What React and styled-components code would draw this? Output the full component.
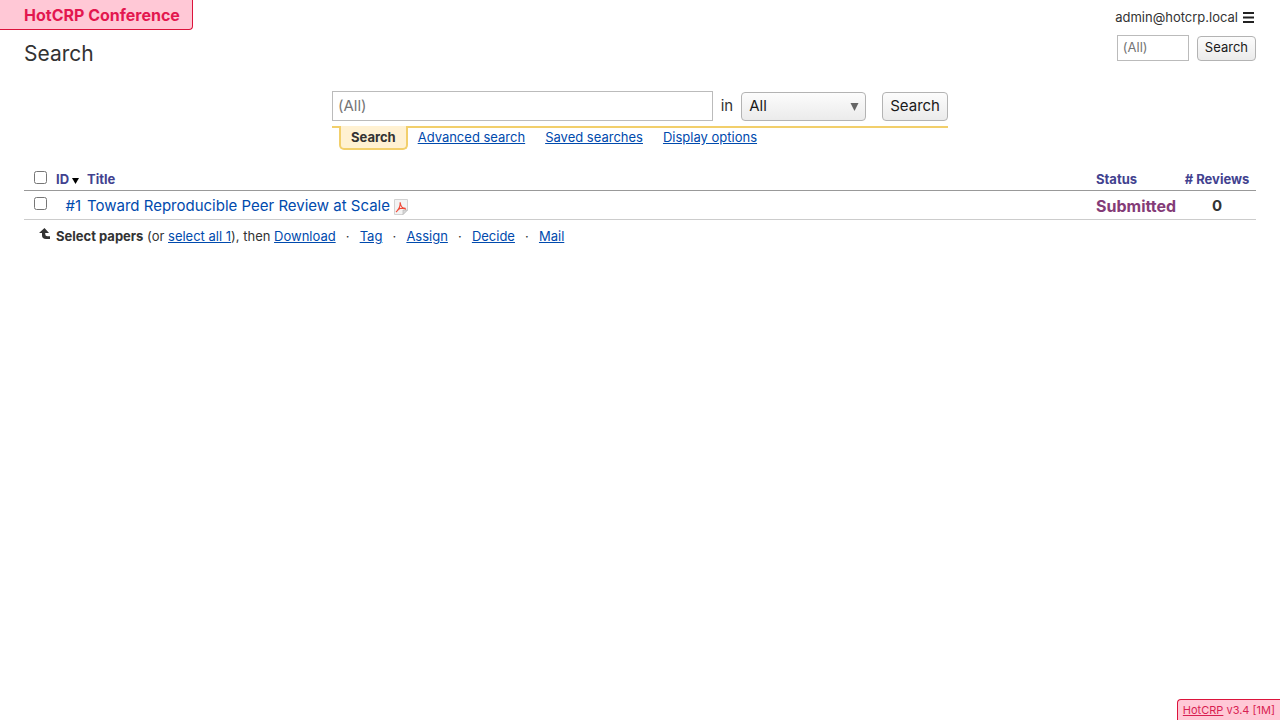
import React, { useState } from "react";
import styled, { createGlobalStyle } from "styled-components";

const GlobalStyle = createGlobalStyle`
  * {
    box-sizing: border-box;
  }

  body {
    margin: 0;
    background: white;
    color: #333333;
    font-family: Inter, "Liberation Sans", sans-serif;
    font-size: 15px;
    line-height: 20px;
  }

  button, input, select {
    font-family: inherit;
    color: #1a1a1a;
  }
`;

const Page = styled.div`
  display: flex;
  flex-direction: column;
  min-height: 100vh;
`;

const Header = styled.header`
  display: flex;
  justify-content: space-between;
  align-items: flex-start;
  padding-right: 24px;
`;

const SiteName = styled.a`
  display: block;
  width: max-content;
  padding: 5px 12px 4px 24px;
  border: 1px solid #dc143c;
  border-width: 0 1px 1px 0;
  border-bottom-right-radius: 4px;
  background: #ffc8d6;
  color: #e3174f;
  font-size: 16px;
  font-weight: 700;
  text-decoration: none;
`;

const PageTitle = styled.h1`
  margin: 10px 0 0 24px;
  font-size: 21px;
  font-weight: 400;
  line-height: 28px;
`;

const Profile = styled.div`
  display: flex;
  flex-direction: column;
  align-items: flex-end;
  gap: 8px;
  padding-top: 7px;
  font-size: 13px;
`;

const Account = styled.div`
  display: flex;
  align-items: center;
  gap: 5px;
`;

const MenuButton = styled.button`
  display: flex;
  padding: 0;
  border: 0;
  background: none;
`;

const QuickSearch = styled.form`
  display: flex;
  align-items: center;
  gap: 8px;
`;

const TextInput = styled.input`
  flex: ${(props) => (props.$small ? "none" : "1")};
  width: ${(props) => (props.$small ? "72px" : "auto")};
  min-width: 0;
  height: ${(props) => (props.$small ? "26px" : "30px")};
  padding: 0 5px 2px;
  border: 1px solid #bbbbbb;
  font-size: ${(props) => (props.$small ? "13px" : "15px")};

  &::placeholder {
    color: #757575;
  }
`;

const Button = styled.button`
  height: ${(props) => (props.$small ? "25px" : "29px")};
  padding: 0 7px 2px;
  border: 1px solid #b3b3b3;
  border-radius: 4px;
  background: linear-gradient(#fcfcfc, #ebebeb);
  font-size: ${(props) => (props.$small ? "13px" : "15px")};
`;

const Main = styled.main`
  flex: 1;
  padding: 23px 24px 0;
`;

const SearchPanel = styled.section`
  width: 50%;
  margin: 0 auto;
`;

const SearchForm = styled.form`
  display: flex;
  align-items: center;
  gap: 8px;
  padding-bottom: 5px;
`;

const SelectWrap = styled.span`
  position: relative;
  margin-right: 8px;
`;

const Select = styled.select`
  appearance: none;
  display: block;
  width: 125px;
  height: 29px;
  padding: 0 7px 2px;
  border: 1px solid #b3b3b3;
  border-radius: 4px;
  background: linear-gradient(#fcfcfc, #ebebeb);
  font-size: 15px;
`;

const SelectArrow = styled.svg`
  position: absolute;
  top: 11px;
  right: 7px;
  pointer-events: none;
`;

const Tabs = styled.nav`
  display: flex;
  align-items: flex-start;
  gap: 20px;
  padding-left: 7px;
  border-top: 2px solid #f2cf6b;
  font-size: 13px;
`;

const Link = styled.a`
  color: #004aad;
`;

const ActiveTab = styled.a`
  margin: -2px -10px 0 0;
  padding: 1px 10px;
  border: 2px solid #f2cf6b;
  border-top: 0;
  border-radius: 0 0 5px 5px;
  background: #fff1d2;
  color: #333333;
  font-weight: 700;
  text-decoration: none;
`;

const TabLink = styled(Link)`
  margin-top: -1px;
`;

const PaperTable = styled.table`
  width: 100%;
  margin-top: 18px;
  border-collapse: collapse;

  th, td {
    padding: 5px 6px 3px 0;
    text-align: left;
    vertical-align: middle;
  }

  th {
    border-bottom: 1px solid #999999;
    padding: 1px 6px 1px 0;
    color: #42428f;
    font-size: 13px;
    white-space: nowrap;
  }

  td {
    border-bottom: 1px solid #cccccc;
  }

  th:first-child, td:first-child {
    width: 32px;
    padding: 0 0 3px 10px;
  }

  th:last-child, td:last-child {
    width: 72px;
    text-align: center;
  }
`;

const IdCell = styled.td`
  width: 31px;
  && {
    text-align: right;
  }
`;

const StatusCell = styled.td`
  width: 88px;
  color: #843c78;
  font-size: 16px;
  font-weight: 700;
`;

const Checkbox = styled.input`
  display: block;
  width: 13px;
  height: 13px;
  margin: 0;
`;

const PaperLink = styled(Link)`
  text-decoration: none;
`;

const PdfIcon = styled.svg`
  vertical-align: middle;
`;

const Actions = styled.div`
  display: flex;
  padding: 6px 0 0 14px;
  font-size: 13px;
  white-space: pre;
`;

const ActionArrow = styled.svg`
  margin-right: 4px;
`;

const Separator = styled.span`
  width: 24px;
  text-align: center;
`;

const Version = styled.footer`
  align-self: flex-end;
  padding: 1px 5px;
  border: 1px solid #dc143c;
  border-width: 1px 0 0 1px;
  border-top-left-radius: 4px;
  background: #ffc8d6;
  color: #d81f52;
  font-size: 11px;
  line-height: 18px;

  a {
    color: inherit;
  }
`;

const tabs = ["Advanced search", "Saved searches", "Display options"];
const actions = ["Download", "Tag", "Assign", "Decide", "Mail"];

export default function App() {
  const [selected, setSelected] = useState(false);

  const onSelect = (e) => setSelected(e.target.checked);
  const onSubmit = (e) => e.preventDefault();

  return (
    <Page>
      <GlobalStyle />
      <Header>
        <div>
          <SiteName href="#home">HotCRP Conference</SiteName>
          <PageTitle>Search</PageTitle>
        </div>
        <Profile>
          <Account>
            <span>admin@hotcrp.local</span>
            <MenuButton type="button" aria-label="Menu">
              <svg width="13" height="12" viewBox="0 0 13 12">
                <path d="M0 2h11M0 6.500h11M0 11h11" stroke="#222" strokeWidth="1.800" />
              </svg>
            </MenuButton>
          </Account>
          <QuickSearch onSubmit={onSubmit}>
            <TextInput $small placeholder="(All)" aria-label="Quick search" />
            <Button $small>Search</Button>
          </QuickSearch>
        </Profile>
      </Header>
      <Main>
        <SearchPanel>
          <SearchForm onSubmit={onSubmit}>
            <TextInput placeholder="(All)" aria-label="Search" />
            <label htmlFor="scope">in</label>
            <SelectWrap>
              <Select id="scope">
                <option>All</option>
              </Select>
              <SelectArrow width="9" height="8" viewBox="0 0 9 8">
                <path d="M0.500 0h8l-4 8z" fill="#666" />
              </SelectArrow>
            </SelectWrap>
            <Button>Search</Button>
          </SearchForm>
          <Tabs>
            <ActiveTab href="#search">Search</ActiveTab>
            {tabs.map((tab) => (
              <TabLink key={tab} href="#tab">{tab}</TabLink>
            ))}
          </Tabs>
        </SearchPanel>
        <PaperTable>
          <thead>
            <tr>
              <th>
                <Checkbox type="checkbox" aria-label="Select all" checked={selected} onChange={onSelect} />
              </th>
              <th>
                ID{" "}
                <svg width="7" height="6" viewBox="0 0 7 6">
                  <path d="M0 0h7L3.500 6z" fill="#000" />
                </svg>
              </th>
              <th>Title</th>
              <th>Status</th>
              <th># Reviews</th>
            </tr>
          </thead>
          <tbody>
            <tr>
              <td>
                <Checkbox type="checkbox" aria-label="Select #1" checked={selected} onChange={onSelect} />
              </td>
              <IdCell>
                <PaperLink href="#paper">#1</PaperLink>
              </IdCell>
              <td>
                <PaperLink href="#paper">Toward Reproducible Peer Review at Scale</PaperLink>{" "}
                <PdfIcon width="14" height="16" viewBox="0 0 14 16">
                  <path d="M0.500 0.500h13v10.500l-4.500 4.500h-8.500z" fill="#f3f3f3" stroke="#d2d2d2" />
                  <path d="M13.500 11L9 15.500V11z" fill="#d8d8d8" stroke="#b8b8b8" strokeWidth="0.700" />
                  <path d="M6.200 3.200C6.500 7.500 4.500 11 2 13M6.200 3.500C6.500 7 8.500 9.500 12 10.200M3.500 10.800C5.500 9.500 8 9 11.500 9.300" fill="none" stroke="#f04a38" strokeWidth="1.200" />
                </PdfIcon>
              </td>
              <StatusCell>Submitted</StatusCell>
              <td><b>0</b></td>
            </tr>
          </tbody>
        </PaperTable>
        <Actions>
          <ActionArrow width="14" height="14" viewBox="0 0 14 14">
            <path d="M6.500 2L1 7h3v2.200Q4 13 8 13h4v-2.800H9.500Q7.200 10.200 7.200 8V7H11z" fill="#333" />
          </ActionArrow>
          <b>Select papers</b> (or <Link href="#all">select all 1</Link>), then{" "}
          {actions.map((action, i) => (
            <React.Fragment key={action}>
              {i > 0 && <Separator>·</Separator>}
              <Link href="#action">{action}</Link>
            </React.Fragment>
          ))}
        </Actions>
      </Main>
      <Version>
        <a href="#hotcrp">HotCRP</a> v3.4 [1M]
      </Version>
    </Page>
  );
}
